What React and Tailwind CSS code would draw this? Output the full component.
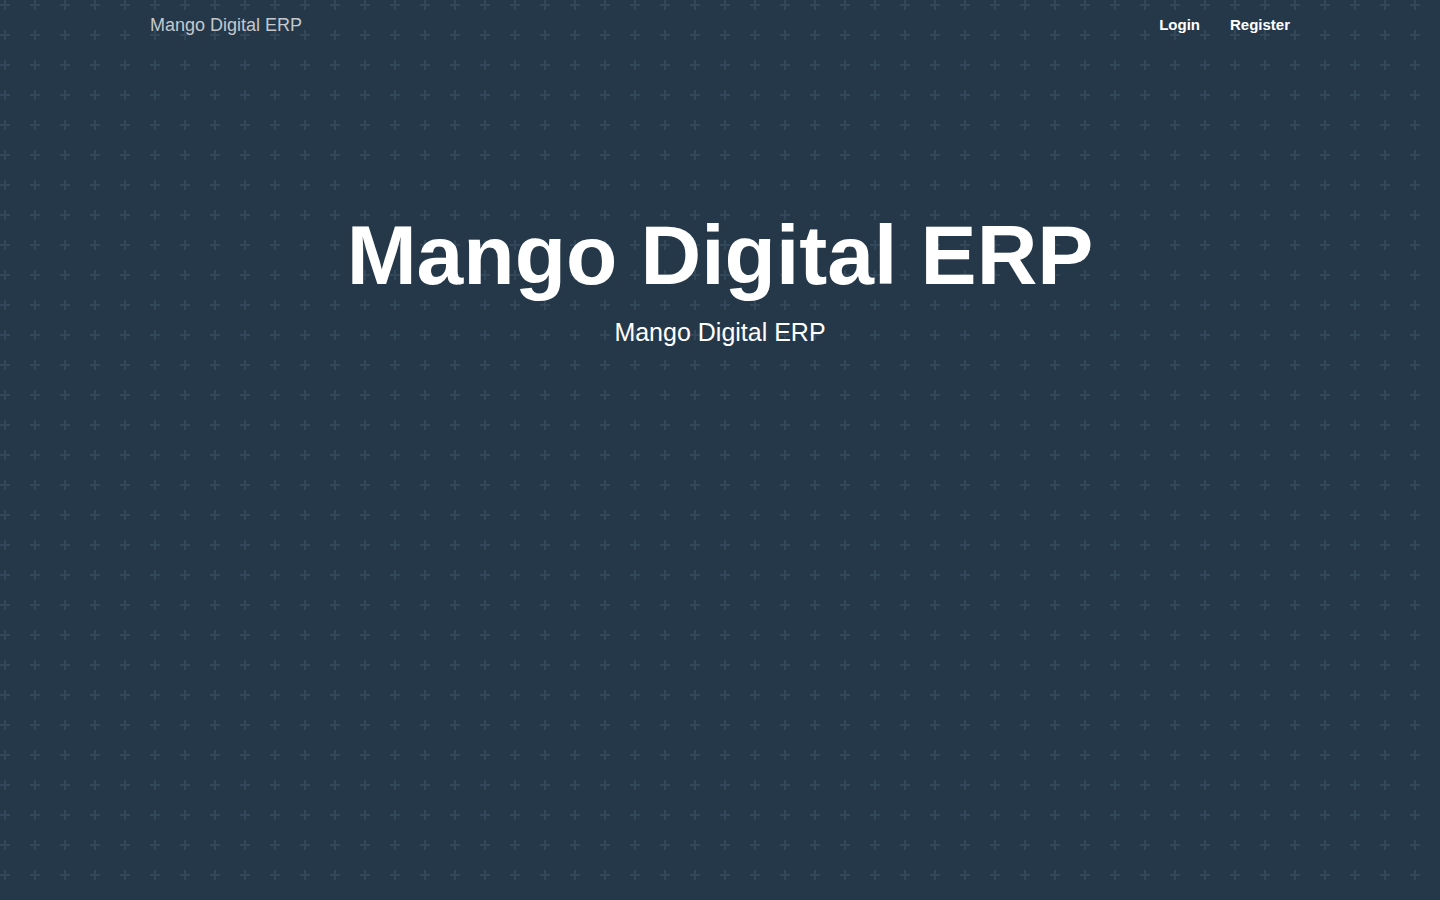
import React from "react";

export default function App() {
  return (
    <div className="relative min-h-[900px] w-full overflow-hidden bg-[#253849]" style={{ fontFamily: '"Liberation Sans", Arial, sans-serif' }}>
      <svg className="absolute inset-0 h-full w-full" aria-hidden="true">
        <defs>
          <pattern id="plus" x="0" y="0" width="30" height="30" patternUnits="userSpaceOnUse">
            <rect x="0" y="4" width="10" height="2" fill="#33475a" />
            <rect x="4" y="0" width="2" height="10" fill="#33475a" />
          </pattern>
        </defs>
        <rect width="100%" height="100%" fill="url(#plus)" />
      </svg>
      <div className="relative">
        <nav className="mx-auto flex h-[50px] w-[1140px] items-center justify-between">
          <span className="text-[18px] text-[#c4c8cc]">Mango Digital ERP</span>
          <div className="flex items-center gap-[30px] text-[15px] font-bold text-white">
            <span>Login</span>
            <span>Register</span>
          </div>
        </nav>
        <div className="flex flex-col items-center pt-[155px]">
          <h1 className="text-[84px] font-bold leading-[100px] text-white">Mango Digital ERP</h1>
          <p className="mt-[12px] text-[25px] leading-[30px] text-white">Mango Digital ERP</p>
        </div>
      </div>
    </div>
  );
}
